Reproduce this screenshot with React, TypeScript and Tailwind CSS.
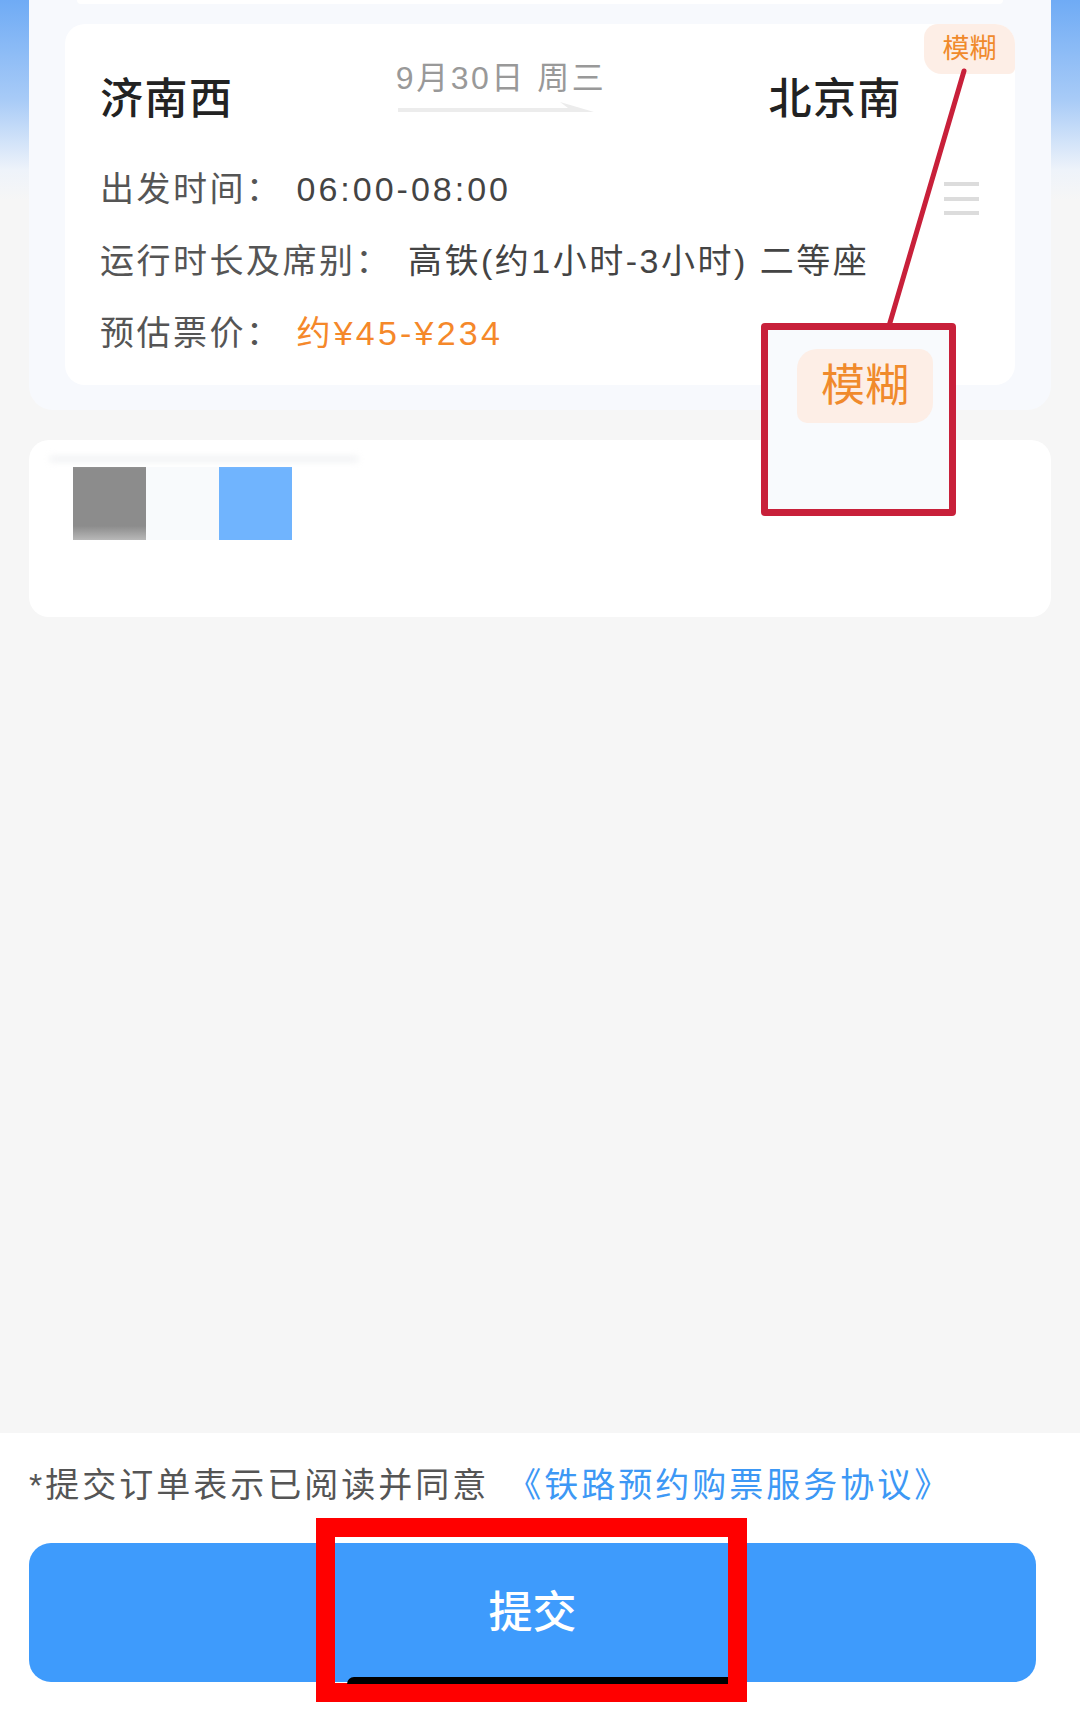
import React from "react";

const font = "font-['Liberation_Sans','Noto_Sans_CJK_SC',sans-serif]";

export default function App() {
  return (
    <div
      className={`relative w-[1080px] h-[1710px] overflow-hidden flex flex-col bg-[linear-gradient(to_bottom,#6fabf5_0px,#a8cbf7_100px,#eef3fa_170px,#f6f6f6_200px,#f6f6f6_100%)] ${font}`}
    >
      {/* main content */}
      <div className="flex-1 flex flex-col">
        {/* outer card */}
        <div className="mx-[29px] -mt-[30px] pt-[30px] pb-[25px] px-[36px] rounded-[24px] bg-[#f7f9fd]">
          <div className="mx-[12px] h-[4px] rounded-b-[12px] bg-white" />
          {/* inner card */}
          <div className="relative mt-[20px] h-[361px] rounded-[20px] bg-white">
            {/* tag */}
            <div className="absolute right-0 top-0 w-[91px] h-[50px] rounded-tr-[20px] rounded-bl-[18px] rounded-tl-[14px] rounded-br-[6px] bg-[#fdeee6] flex items-center justify-center text-[27px] leading-none text-[#f08a2c]">
              模糊
            </div>

            {/* station row */}
            <div className="pt-[34px] pl-[35px] pr-[113px] flex items-start justify-between">
              <div className="mt-[13px] text-[43px] leading-[56px] tracking-[1.5px] font-medium text-[#222]">济南西</div>
              <div className="w-[215px] flex flex-col items-center">
                <div className="text-[32px] leading-[40px] tracking-[2.5px] text-[#999]">9月30日 周三</div>
                <svg width="215" height="14" viewBox="0 0 215 14" className="mt-[4px]">
                  <polygon points="4,6 174,6 166,0 200,10 4,10" fill="#ececec" />
                </svg>
              </div>
              <div className="mt-[13px] text-[43px] leading-[56px] tracking-[1.5px] font-medium text-[#222]">北京南</div>
            </div>

            {/* info rows */}
            <div className="mt-[26px] pl-[35px] pr-[36px] flex flex-col">
              <div className="h-[72px] flex items-center">
                <span className="text-[34px] tracking-[2.5px] text-[#555]">出发时间：</span>
                <span className="ml-[14px] text-[34px] tracking-[3px] text-[#444]">06:00-08:00</span>
                <svg width="35" height="34" viewBox="0 0 35 34" className="ml-auto mt-[20px]">
                  <rect x="0" y="0" width="35" height="4" fill="#dcdcdc" />
                  <rect x="0" y="15" width="35" height="4" fill="#dcdcdc" />
                  <rect x="0" y="29" width="35" height="4" fill="#dcdcdc" />
                </svg>
              </div>
              <div className="h-[72px] flex items-center">
                <span className="text-[34px] tracking-[2.5px] text-[#555]">运行时长及席别：</span>
                <span className="ml-[16px] text-[34px] tracking-[2.5px] text-[#444]">高铁(约1小时-3小时) 二等座</span>
              </div>
              <div className="h-[72px] flex items-center">
                <span className="text-[34px] tracking-[2.5px] text-[#555]">预估票价：</span>
                <span className="ml-[14px] text-[34px] tracking-[3.2px] text-[#f5882a]">约¥45-¥234</span>
              </div>
            </div>
          </div>
        </div>

        {/* second card */}
        <div className="mx-[29px] mt-[30px] h-[177px] rounded-[20px] bg-white pt-[16px] pl-[20px]">
          <div className="h-[6px] w-[310px] rounded-full bg-[#f1f2f4] blur-[3px]" />
          <div className="mt-[5px] ml-[24px] flex">
            <div className="w-[73px] h-[73px] bg-[linear-gradient(to_top,#b8b8b8_0px,#8c8c8c_14px,#8c8c8c_100%)]" />
            <div className="w-[73px] h-[73px] bg-[#f8fafc]" />
            <div className="w-[73px] h-[73px] bg-[#70b4fe]" />
          </div>
        </div>
      </div>

      {/* bottom area */}
      <div className="h-[277px] bg-white flex flex-col px-[29px]">
        <div className="mt-[30px] h-[44px] flex items-center text-[34px] leading-none">
          <span className="tracking-[3px] text-[#555]">*提交订单表示已阅读并同意</span>
          <span className="ml-[18px] tracking-[3px] text-[#3d98f5]">《铁路预约购票服务协议》</span>
        </div>
        <button className="mt-[36px] w-[1007px] h-[139px] rounded-[22px] bg-[#3e9bfc] flex items-center justify-center text-[44px] font-medium text-white">
          提交
        </button>
      </div>

      {/* annotations */}
      <svg className="absolute left-0 top-0 pointer-events-none" width="1080" height="1710">
        <line x1="964" y1="71" x2="889" y2="326" stroke="#c8203a" strokeWidth="5" strokeLinecap="round" />
      </svg>
      <div className="absolute left-[761px] top-[323px] w-[195px] h-[193px] rounded-[4px] border-[7px] border-[#c8203a] bg-[#f8fafd]">
        <div className="ml-[29px] mt-[19px] w-[136px] h-[74px] rounded-tl-[20px] rounded-br-[20px] rounded-tr-[14px] rounded-bl-[10px] bg-[#fdeee6] flex items-center justify-center text-[44px] leading-none text-[#f08a2c]">
          模糊
        </div>
      </div>

      <div className="absolute left-[316px] top-[1518px] w-[431px] h-[184px] border-[19px] border-[#ff0000]">
        <div className="absolute left-[12px] right-0 bottom-[-1px] h-[7px] rounded-tl-[8px] bg-black" />
      </div>
    </div>
  );
}
